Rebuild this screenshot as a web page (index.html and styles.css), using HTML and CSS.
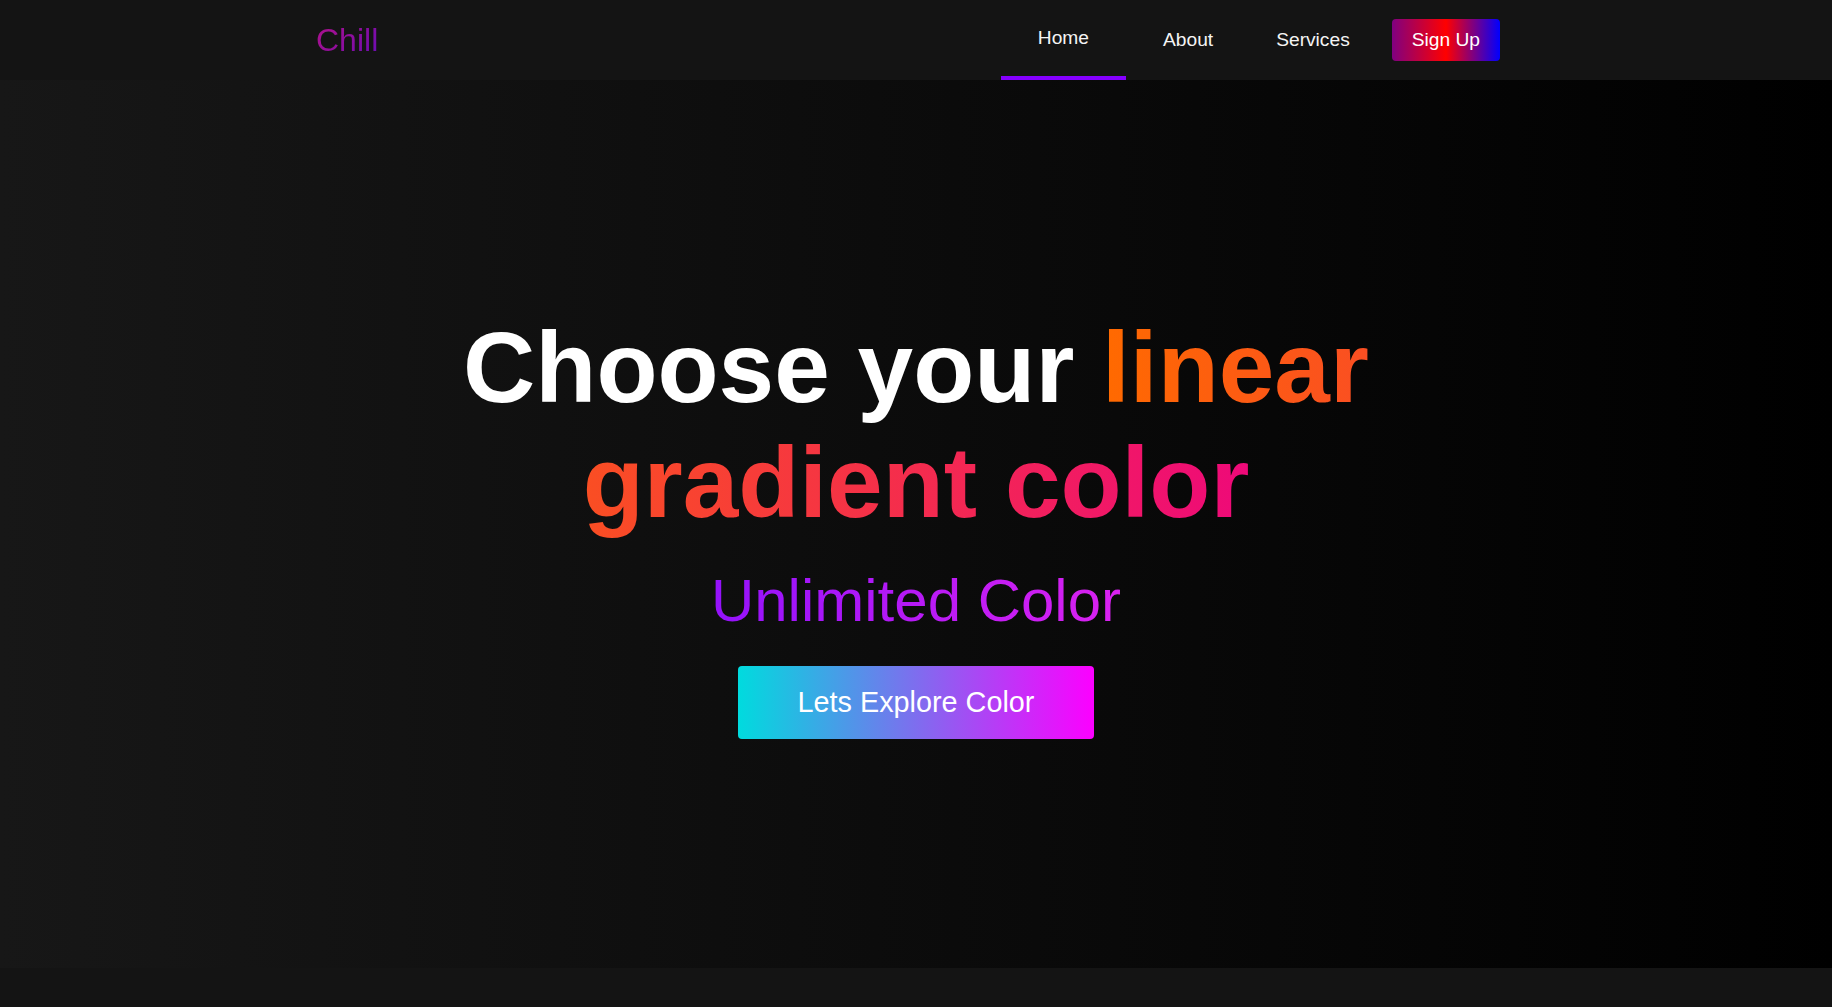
FILE: index.html
```html
<!DOCTYPE html>
<html lang="en">
<head>
<meta charset="utf-8">
<title>Chill</title>
<link rel="stylesheet" href="styles.css">
</head>
<body>
<header class="header">
  <div class="header-inner">
    <a class="logo" href="#">Chill</a>
    <nav>
      <ul class="nav-links">
        <li><a class="nav-link nav-home active" href="#">Home</a></li>
        <li><a class="nav-link nav-about" href="#">About</a></li>
        <li><a class="nav-link nav-services" href="#">Services</a></li>
        <li><a class="signup" href="#">Sign Up</a></li>
      </ul>
    </nav>
  </div>
</header>
<section class="hero">
  <h1 class="hero-title">Choose your <span class="grad">linear gradient color</span></h1>
  <h2 class="hero-sub"><span class="sub-grad">Unlimited Color</span></h2>
  <a class="explore" href="#">Lets Explore Color</a>
</section>
</body>
</html>
```
FILE: styles.css
```css
* { box-sizing: border-box; }
html, body {
  margin: 0;
  padding: 0;
}
body {
  background: #141414;
  font-family: "Liberation Sans", Arial, sans-serif;
  color: #fff;
  min-height: 1007px;
}
a { text-decoration: none; color: inherit; }

.header {
  background: #141414;
  height: 80px;
}
.header-inner {
  width: 1200px;
  margin: 0 auto;
  padding-right: 16px;
  height: 80px;
  display: flex;
  align-items: center;
  justify-content: space-between;
}
.logo {
  font-size: 32px;
  background: linear-gradient(135deg, #b0128a 0%, #8e0e9e 50%, #680cb6 100%);
  -webkit-background-clip: text;
  background-clip: text;
  -webkit-text-fill-color: transparent;
  color: transparent;
}
.nav-links {
  list-style: none;
  margin: 0;
  padding: 0;
  display: flex;
  align-items: center;
  height: 80px;
}
.nav-links li { display: flex; align-items: center; height: 80px; }
.nav-link {
  display: flex;
  align-items: center;
  height: 80px;
  font-size: 19.2px;
  color: #f4f4f4;
}
.nav-home {
  padding: 0 37px;
  border-bottom: 4px solid #8600ff;
}
.nav-about { margin-left: 37px; }
.nav-services { margin-left: 63px; }
.signup {
  margin-left: 42px;
  display: flex;
  align-items: center;
  height: 42px;
  padding: 0 20px;
  font-size: 19.2px;
  color: #fff;
  border-radius: 4px;
  background: linear-gradient(to right, #800080, #ff0000, #0000ff);
}

.hero {
  height: 888px;
  background: linear-gradient(to right, #171717, #000000);
  display: flex;
  flex-direction: column;
  align-items: center;
  justify-content: center;
  text-align: center;
}
.hero-title {
  margin: 0;
  font-size: 100px;
  font-weight: 700;
  line-height: normal;
  color: #fff;
  width: 1000px;
}
.grad {
  background: linear-gradient(to right, #ff6a00, #ee0979);
  -webkit-background-clip: text;
  background-clip: text;
  -webkit-text-fill-color: transparent;
  color: transparent;
}
.hero-sub {
  margin: 26px 0 0;
  font-size: 60px;
  font-weight: 400;
  line-height: normal;
}
.sub-grad {
  background: linear-gradient(to right, #9412fb, #da22f0);
  -webkit-background-clip: text;
  background-clip: text;
  -webkit-text-fill-color: transparent;
  color: transparent;
}
.explore {
  margin-top: 31px;
  display: inline-block;
  padding: 20px 60px;
  font-size: 28.8px;
  line-height: normal;
  color: #fff;
  border-radius: 4px;
  background: linear-gradient(to right, #00dbde, #fc00ff);
}
```
